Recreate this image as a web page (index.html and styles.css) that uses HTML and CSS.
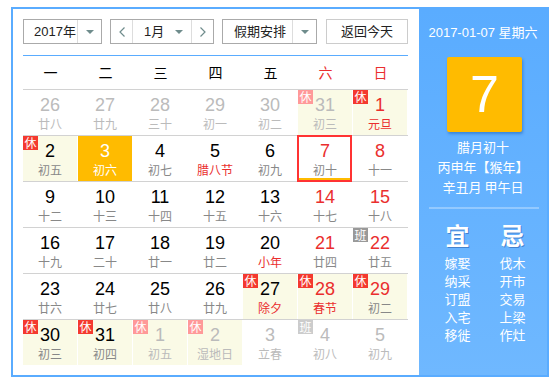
FILE: index.html
```html
<!DOCTYPE html>
<html lang="zh">
  <head>
    <meta charset="UTF-8" />
    <title>万年历</title>
    <link rel="stylesheet" href="styles.css">
  </head>
  <body>
    <div class="calendar">
      <div class="main">
        <div class="toolbar">
          <div class="select year">
            <div class="label">2017年</div>
            <div class="arrow"><i></i></div>
          </div>
          <div class="select month">
            <div class="nav">
              <svg width="6" height="10" viewBox="0 0 6 10"><polyline points="5.5,0.5 1,5 5.5,9.5" /></svg>
            </div>
            <div class="label">1月</div>
            <div class="arrow plain"><i></i></div>
            <div class="nav">
              <svg width="6" height="10" viewBox="0 0 6 10"><polyline points="0.5,0.5 5,5 0.5,9.5" /></svg>
            </div>
          </div>
          <div class="select holiday">
            <div class="label">假期安排</div>
            <div class="arrow"><i></i></div>
          </div>
          <div class="btn">返回今天</div>
        </div>

        <div class="week">
          <div>一</div><div>二</div><div>三</div><div>四</div><div>五</div>
          <div class="red">六</div><div class="red">日</div>
        </div>

        <div class="row">
          <div class="day other"><b>26</b><span>廿八</span></div>
          <div class="day other"><b>27</b><span>廿九</span></div>
          <div class="day other"><b>28</b><span>三十</span></div>
          <div class="day other"><b>29</b><span>初一</span></div>
          <div class="day other"><b>30</b><span>初二</span></div>
          <div class="day other hol"><i class="tag">休</i><b>31</b><span>初三</span></div>
          <div class="day hol red fest"><i class="tag">休</i><b>1</b><span>元旦</span></div>
        </div>
        <div class="row">
          <div class="day hol"><i class="tag">休</i><b>2</b><span>初五</span></div>
          <div class="day sel"><b>3</b><span>初六</span></div>
          <div class="day"><b>4</b><span>初七</span></div>
          <div class="day fest"><b>5</b><span>腊八节</span></div>
          <div class="day"><b>6</b><span>初九</span></div>
          <div class="day red today"><b>7</b><span>初十</span></div>
          <div class="day red"><b>8</b><span>十一</span></div>
        </div>
        <div class="row">
          <div class="day"><b>9</b><span>十二</span></div>
          <div class="day"><b>10</b><span>十三</span></div>
          <div class="day"><b>11</b><span>十四</span></div>
          <div class="day"><b>12</b><span>十五</span></div>
          <div class="day"><b>13</b><span>十六</span></div>
          <div class="day red"><b>14</b><span>十七</span></div>
          <div class="day red"><b>15</b><span>十八</span></div>
        </div>
        <div class="row">
          <div class="day"><b>16</b><span>十九</span></div>
          <div class="day"><b>17</b><span>二十</span></div>
          <div class="day"><b>18</b><span>廿一</span></div>
          <div class="day"><b>19</b><span>廿二</span></div>
          <div class="day fest"><b>20</b><span>小年</span></div>
          <div class="day red"><b>21</b><span>廿四</span></div>
          <div class="day red"><i class="tag ban">班</i><b>22</b><span>廿五</span></div>
        </div>
        <div class="row">
          <div class="day"><b>23</b><span>廿六</span></div>
          <div class="day"><b>24</b><span>廿七</span></div>
          <div class="day"><b>25</b><span>廿八</span></div>
          <div class="day"><b>26</b><span>廿九</span></div>
          <div class="day hol fest"><i class="tag">休</i><b>27</b><span>除夕</span></div>
          <div class="day hol red fest"><i class="tag">休</i><b>28</b><span>春节</span></div>
          <div class="day hol red"><i class="tag">休</i><b>29</b><span>初二</span></div>
        </div>
        <div class="row">
          <div class="day hol"><i class="tag">休</i><b>30</b><span>初三</span></div>
          <div class="day hol"><i class="tag">休</i><b>31</b><span>初四</span></div>
          <div class="day other hol"><i class="tag">休</i><b>1</b><span>初五</span></div>
          <div class="day other hol"><i class="tag">休</i><b>2</b><span>湿地日</span></div>
          <div class="day other"><b>3</b><span>立春</span></div>
          <div class="day other"><i class="tag ban">班</i><b>4</b><span>初八</span></div>
          <div class="day other"><b>5</b><span>初九</span></div>
        </div>
      </div>

      <div class="side">
        <div class="date">2017-01-07 星期六</div>
        <div class="big">7</div>
        <div class="lunar">
          <div>腊月初十</div>
          <div>丙申年【猴年】</div>
          <div>辛丑月 甲午日</div>
        </div>
        <div class="line"></div>
        <div class="yiji">
          <div>
            <h3>宜</h3>
            <p>嫁娶</p><p>纳采</p><p>订盟</p><p>入宅</p><p>移徙</p>
          </div>
          <div>
            <h3>忌</h3>
            <p>伐木</p><p>开市</p><p>交易</p><p>上梁</p><p>作灶</p>
          </div>
        </div>
      </div>
    </div>
  </body>
</html>
```

FILE: styles.css
```css
* {
  box-sizing: border-box;
}
:root {
  --blue: #5aacff;
  --red: #ea2e2e;
  --yellow: #ffbb00;
}
body {
  margin: 0;
  background: #fff;
  font-family: "Liberation Sans", Arial, "Noto Sans CJK SC", sans-serif;
  color: #000;
}
.calendar {
  display: flex;
  width: 538px;
  height: 370px;
  margin: 7px 0 0 11px;
  border: 2px solid var(--blue);
}
.main {
  width: 406px;
  padding: 10px 11px 0 10px;
  background: #fff;
}

/* toolbar */
.toolbar {
  display: flex;
  gap: 8px;
  height: 25px;
}
.select {
  display: flex;
  height: 25px;
  border: 1px solid #aaa;
  font-size: 13px;
  line-height: 23px;
  color: #222;
}
.select .label {
  flex: 1;
  padding-left: 10px;
}
.select .arrow {
  display: flex;
  align-items: center;
  justify-content: center;
  width: 24px;
  border-left: 1px solid #ddd;
}
.select .arrow.plain {
  border-left: none;
}
.arrow i {
  width: 0;
  height: 0;
  border-left: 4px solid transparent;
  border-right: 4px solid transparent;
  border-top: 4px solid #6f8c8c;
}
.year {
  width: 79px;
}
.month {
  width: 104px;
}
.month .label {
  padding-left: 11px;
}
.nav {
  display: flex;
  align-items: center;
  justify-content: center;
  width: 22px;
}
.nav:first-child {
  border-right: 1px solid #ddd;
}
.nav:last-child {
  border-left: 1px solid #ddd;
}
.nav svg polyline {
  fill: none;
  stroke: #6f8c8c;
  stroke-width: 1.2;
}
.holiday {
  width: 95px;
}
.holiday .label {
  padding-left: 11px;
}
.btn {
  width: 82px;
  margin-left: 1px;
  height: 25px;
  border: 1px solid #ccc;
  font-size: 13px;
  line-height: 23px;
  text-align: center;
  color: #222;
}

/* grid */
.week,
.row {
  display: grid;
  grid-template-columns: repeat(7, 55px);
}
.week {
  margin-top: 11px;
  height: 34px;
  border-top: 1px solid var(--blue);
  font-size: 14px;
  line-height: 33px;
  text-align: center;
  font-family: "Noto Sans CJK SC", sans-serif;
}
.week .red {
  color: var(--red);
}
.row {
  height: 46px;
  border-top: 1px solid #d2d2d2;
}
.day {
  position: relative;
  padding-top: 5px;
  border-right: 1px solid #fff;
  text-align: center;
}
.day b {
  display: block;
  font-weight: normal;
  font-size: 18px;
  line-height: 20px;
}
.day span {
  display: block;
  font-size: 12px;
  line-height: 17px;
  color: #888;
  font-family: "Noto Sans CJK SC", sans-serif;
}
.day.red b {
  color: var(--red);
}
.day.fest span {
  color: var(--red);
}
.day.hol {
  background: #fafae6;
}
.day.other b,
.day.other span {
  color: #bbb;
}
.day.sel {
  background: var(--yellow);
}
.day.sel b,
.day.sel span {
  color: #fff;
}
.day.today::after {
  content: "";
  position: absolute;
  left: -1px;
  top: -1px;
  right: 0;
  bottom: -1px;
  border: 2px solid #f33;
  box-shadow: inset 0 -2px 0 var(--yellow);
}
.tag {
  position: absolute;
  left: 0;
  top: 0;
  width: 15px;
  height: 14px;
  background: #f4392f;
  color: #fff;
  font-style: normal;
  font-size: 12px;
  line-height: 14px;
  text-align: center;
  font-family: "Noto Sans CJK SC", sans-serif;
}
.tag.ban {
  background: #999;
}
.other .tag {
  background: #f99;
}
.other .tag.ban {
  background: #ccc;
}

/* side panel */
.side {
  flex: 1;
  background: linear-gradient(#5aacff, #6fb8ff);
  color: #fff;
  text-align: center;
  font-family: "Noto Sans CJK SC", sans-serif;
}
.date {
  padding-top: 14px;
  font-size: 13px;
  line-height: 20px;
  font-family: "Liberation Sans", Arial, "Noto Sans CJK SC", sans-serif;
}
.big {
  width: 75px;
  height: 75px;
  margin: 14px 0 0 28px;
  background: var(--yellow);
  border-radius: 2px;
  box-shadow: 1px 2px 3px rgba(0, 70, 160, 0.4);
  font-size: 52px;
  line-height: 75px;
  font-family: "Liberation Sans", Arial, sans-serif;
}
.lunar {
  margin-top: 5px;
  font-size: 13px;
  line-height: 20px;
}
.line {
  height: 2px;
  margin: 10px 8px 0 10px;
  background: rgba(255, 255, 255, 0.3);
}
.yiji {
  display: grid;
  grid-template-columns: 55px 55px;
  margin: 11px 0 0 11px;
}
.yiji h3 {
  margin: 0 0 4px;
  font-size: 24px;
  line-height: 30px;
  text-shadow: 1px 1px 0 rgba(30, 80, 160, 0.5);
}
.yiji p {
  margin: 0;
  font-size: 13px;
  line-height: 18px;
}
```
